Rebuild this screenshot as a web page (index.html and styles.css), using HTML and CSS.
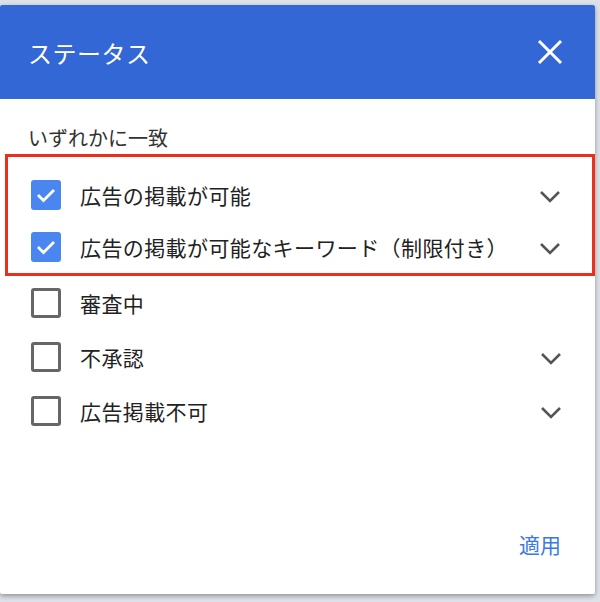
FILE: index.html
```html
<!DOCTYPE html>
<html lang="ja">
<head>
    <meta charset="UTF-8">
    <title>ステータス</title>
    <link rel="stylesheet" href="styles.css">
</head>
<body>
    <div class="dialog">
        <div class="header">
            <span class="title">ステータス</span>
            <svg class="close" width="26" height="26" viewBox="0 0 26 26">
                <path d="M2 2 L24 24 M24 2 L2 24" stroke="#fff" stroke-width="3" fill="none"/>
            </svg>
        </div>
        <div class="content">
            <div class="label">いずれかに一致</div>
            <div class="group">
                <div class="row">
                    <span class="box checked">
                        <svg width="20" height="16" viewBox="0 0 20 16"><path d="M2 8 L7.5 13.5 L18 3" stroke="#fff" stroke-width="2.8" fill="none"/></svg>
                    </span>
                    <span class="text">広告の掲載が可能</span>
                    <svg class="chev" width="22" height="14" viewBox="0 0 22 14"><path d="M2 2 L11 11 L20 2" stroke="#555" stroke-width="2.6" fill="none"/></svg>
                </div>
                <div class="row">
                    <span class="box checked">
                        <svg width="20" height="16" viewBox="0 0 20 16"><path d="M2 8 L7.5 13.5 L18 3" stroke="#fff" stroke-width="2.8" fill="none"/></svg>
                    </span>
                    <span class="text">広告の掲載が可能なキーワード（制限付き）</span>
                    <svg class="chev" width="22" height="14" viewBox="0 0 22 14"><path d="M2 2 L11 11 L20 2" stroke="#555" stroke-width="2.6" fill="none"/></svg>
                </div>
            </div>
            <div class="row">
                <span class="box"></span>
                <span class="text">審査中</span>
            </div>
            <div class="row">
                <span class="box"></span>
                <span class="text">不承認</span>
                <svg class="chev" width="22" height="14" viewBox="0 0 22 14"><path d="M2 2 L11 11 L20 2" stroke="#555" stroke-width="2.6" fill="none"/></svg>
            </div>
            <div class="row">
                <span class="box"></span>
                <span class="text">広告掲載不可</span>
                <svg class="chev" width="22" height="14" viewBox="0 0 22 14"><path d="M2 2 L11 11 L20 2" stroke="#555" stroke-width="2.6" fill="none"/></svg>
            </div>
        </div>
        <div class="footer">
            <span class="apply">適用</span>
        </div>
    </div>
</body>
</html>
```

FILE: styles.css
```css
body {
    margin: 0;
    padding-top: 5px;
    background: #dde2e8;
    font-family: "Noto Sans CJK JP", "Noto Sans", sans-serif;
    height: 602px;
    box-sizing: border-box;
    overflow: hidden;
}
.dialog {
    width: 595px;
    height: 589px;
    background: #fff;
    display: flex;
    flex-direction: column;
    border-radius: 2px;
    box-shadow: 0 2px 5px rgba(0, 0, 0, 0.35);
}
.header {
    height: 94px;
    background: #3367d6;
    display: flex;
    align-items: center;
    justify-content: space-between;
    padding: 0 32px 0 28px;
    border-radius: 2px 2px 0 0;
}
.title {
    color: #fff;
    font-size: 24px;
    letter-spacing: 0.5px;
}
.content {
    flex: 1;
    padding-top: 24px;
}
.label {
    padding-left: 28px;
    font-size: 20px;
    line-height: 30px;
    color: #333;
    margin-bottom: 1px;
}
.group {
    margin-left: 5px;
    border: 3px solid #ea2f1c;
    padding-top: 12px;
}
.row {
    display: flex;
    align-items: center;
    height: 54px;
    padding: 0 33px 0 31px;
}
.group .row {
    height: 52px;
    padding: 0 31px 0 23px;
}
.box {
    width: 30px;
    height: 30px;
    box-sizing: border-box;
    border: 3px solid #666;
    border-radius: 3px;
    display: flex;
    align-items: center;
    justify-content: center;
    flex-shrink: 0;
}
.box.checked {
    background: #4a86f0;
    border-color: #4a86f0;
}
.text {
    margin-left: 19px;
    font-size: 21px;
    letter-spacing: 0.4px;
    color: #222;
    flex: 1;
}
.chev {
    flex-shrink: 0;
    margin-top: 4px;
}
.footer {
    display: flex;
    justify-content: flex-end;
    padding: 0 34px 35px 0;
}
.apply {
    color: #3b78e7;
    font-size: 21px;
}
```
